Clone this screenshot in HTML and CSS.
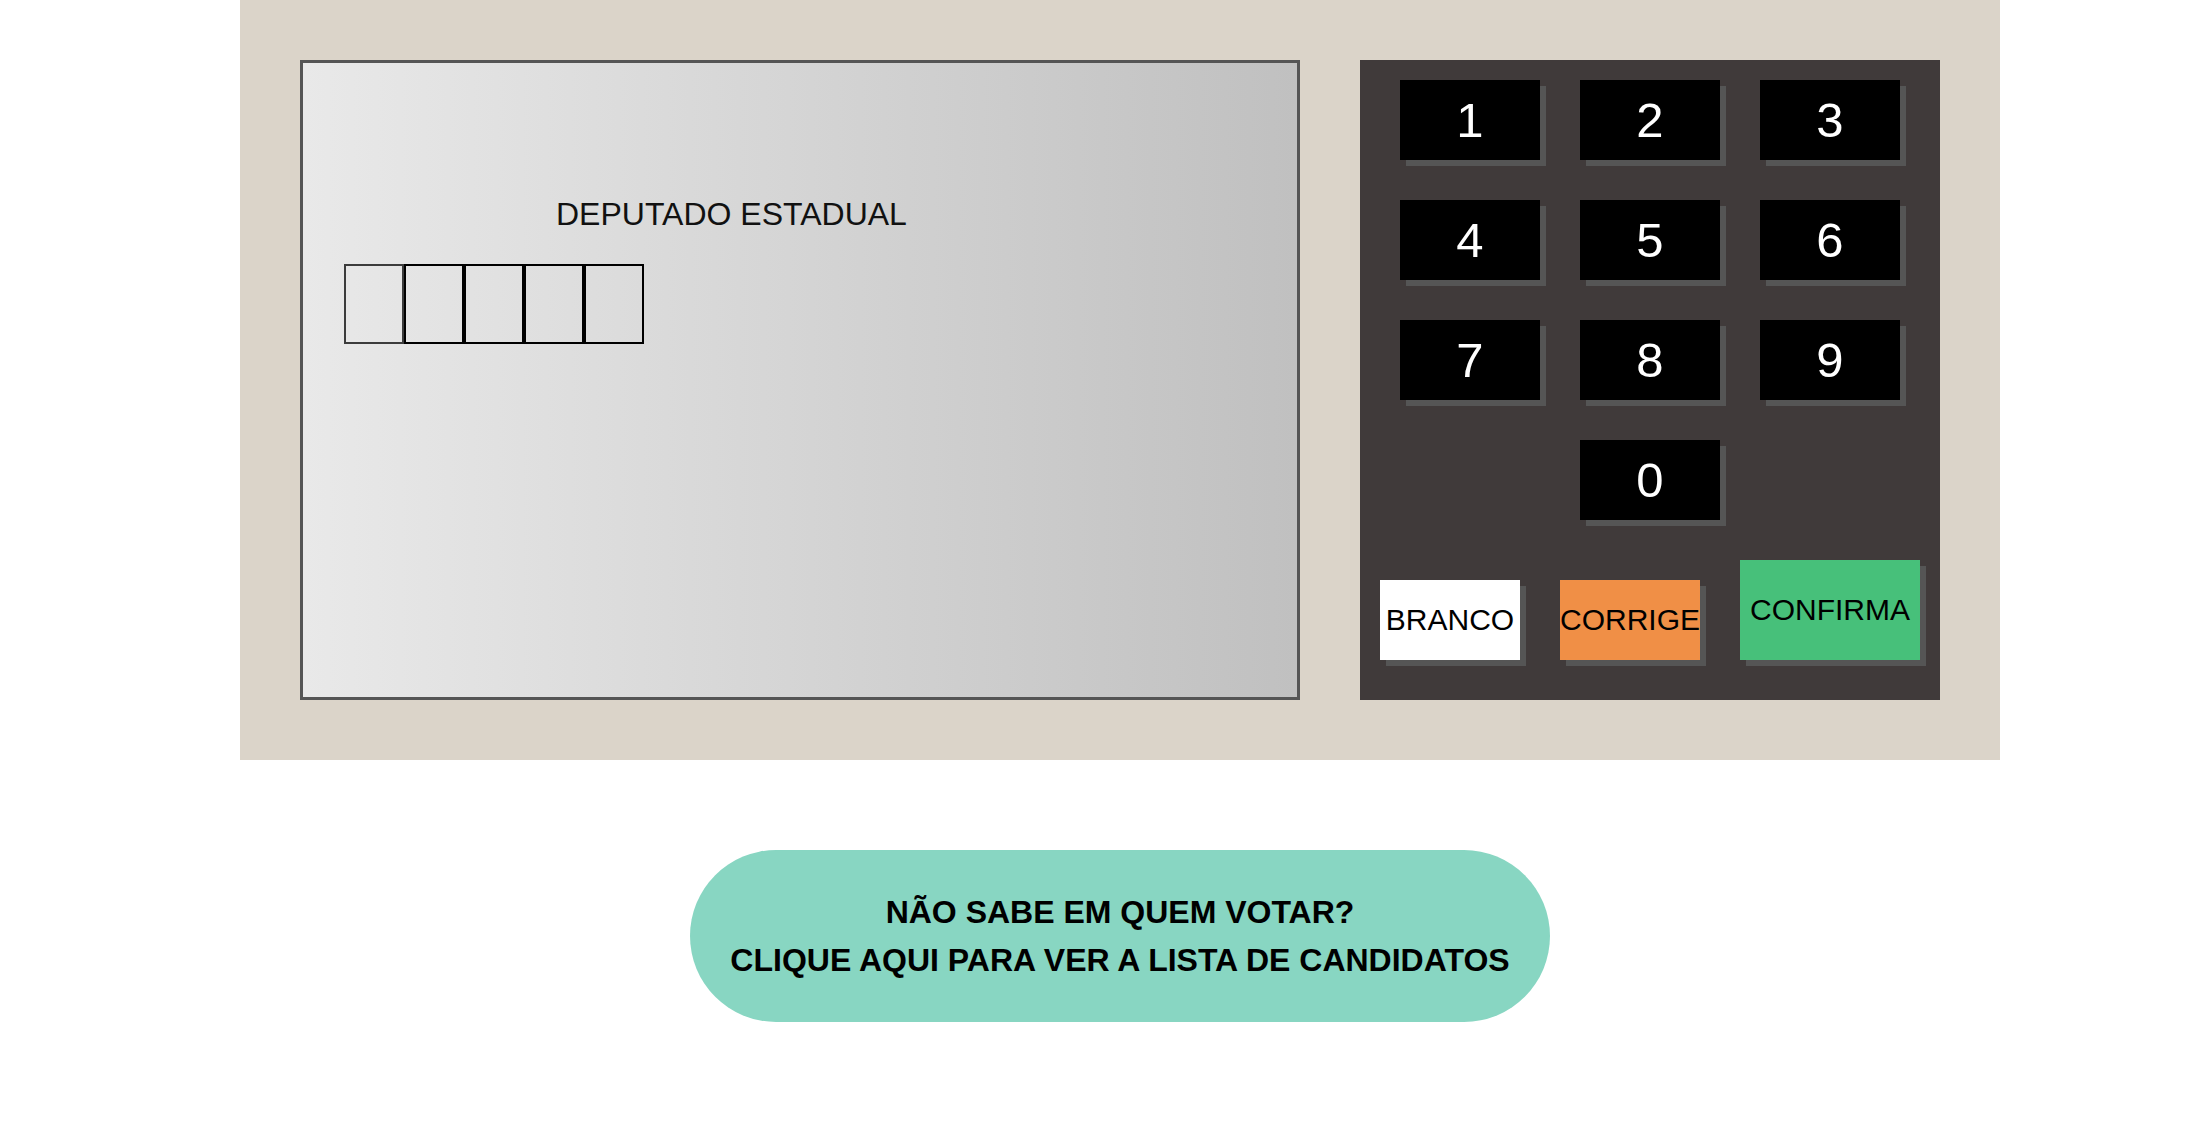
FILE: index.html
```html
<!DOCTYPE html>
<html lang="pt-BR">
<head>
<meta charset="utf-8">
<title>Urna Eletrônica</title>
<link rel="stylesheet" href="styles.css">
</head>
<body>
<main class="page">
  <section class="urna">
    <div class="tela">
      <div class="cargo">DEPUTADO ESTADUAL</div>
      <div class="digitos">
        <div class="digito ativo"></div>
        <div class="digito"></div>
        <div class="digito"></div>
        <div class="digito"></div>
        <div class="digito"></div>
      </div>
    </div>
    <div class="teclado">
      <div class="numeros">
        <button class="tecla">1</button>
        <button class="tecla">2</button>
        <button class="tecla">3</button>
        <button class="tecla">4</button>
        <button class="tecla">5</button>
        <button class="tecla">6</button>
        <button class="tecla">7</button>
        <button class="tecla">8</button>
        <button class="tecla">9</button>
        <button class="tecla zero">0</button>
      </div>
      <div class="acoes">
        <button class="acao branco">BRANCO</button>
        <button class="acao corrige">CORRIGE</button>
        <button class="acao confirma">CONFIRMA</button>
      </div>
    </div>
  </section>
  <button class="ajuda">NÃO SABE EM QUEM VOTAR?<br>CLIQUE AQUI PARA VER A LISTA DE CANDIDATOS</button>
</main>
</body>
</html>
```
FILE: styles.css
```css
* { box-sizing: border-box; }
html, body { margin: 0; padding: 0; background: #ffffff; }
body { font-family: "Liberation Sans", Arial, sans-serif; }

.page {
  padding-left: 40px;
  display: flex;
  flex-direction: column;
  align-items: center;
}

.urna {
  width: 1760px;
  background: #dbd4c9;
  padding: 60px;
  display: flex;
  gap: 60px;
}

.tela {
  width: 1000px;
  height: 640px;
  border: 3px solid #555555;
  background: linear-gradient(to right, #e9e9e9, #c0c0c0);
  padding: 133px 0 0 41px;
}

.cargo {
  font-size: 32px;
  color: #111;
  margin-left: 212px;
  line-height: 36px;
}

.digitos {
  display: flex;
  margin-top: 32px;
}

.digito {
  width: 60px;
  height: 80px;
  border: 2px solid #000;
}

.digito.ativo { border-color: #3c3c3c; }

.teclado {
  width: 580px;
  height: 640px;
  background: #403a3a;
  padding: 20px 20px 40px;
  display: flex;
  flex-direction: column;
  gap: 40px;
}

.numeros {
  display: grid;
  grid-template-columns: repeat(3, 140px);
  grid-auto-rows: 80px;
  gap: 40px;
  margin: 0 20px;
}

button {
  font-family: "Liberation Sans", Arial, sans-serif;
  border: none;
  padding: 0;
  margin: 0;
  cursor: pointer;
}

.tecla {
  background: #000;
  color: #fff;
  font-size: 49px;
  box-shadow: 6px 6px 0 #555555;
}

.zero { grid-column: 2; }

.acoes {
  display: flex;
  align-items: flex-end;
  gap: 40px;
}

.acao {
  width: 140px;
  height: 80px;
  font-size: 30px;
  color: #000;
  box-shadow: 6px 6px 0 #555555;
  white-space: nowrap;
  overflow: visible;
  display: flex;
  align-items: center;
  justify-content: center;
}

.branco { background: #ffffff; }
.corrige { background: #f08f46; }
.confirma { background: #47c07a; width: 180px; height: 100px; }

.ajuda {
  margin-top: 90px;
  width: 860px;
  height: 172px;
  border-radius: 86px / 86px;
  background: #88d6c2;
  color: #000;
  font-weight: bold;
  font-size: 32px;
  line-height: 48px;
  text-align: center;
}
```
